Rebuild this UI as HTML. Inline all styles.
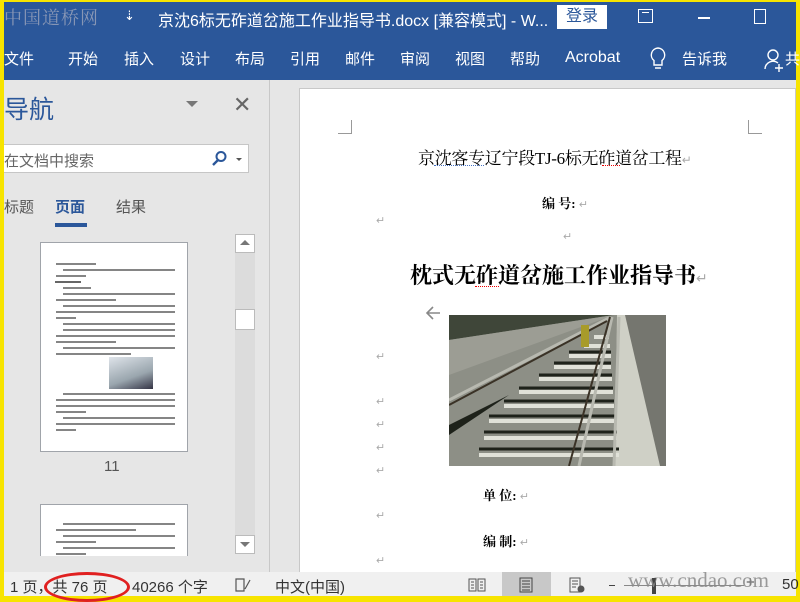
<!DOCTYPE html>
<html><head><meta charset="utf-8"><style>
*{margin:0;padding:0;box-sizing:border-box}
body{width:800px;height:600px;overflow:hidden;background:#f7e400;font-family:"Liberation Sans","Noto Sans CJK SC",sans-serif;position:relative}
.a{position:absolute;white-space:nowrap}
.doc{font-family:"Liberation Serif","Noto Serif CJK SC",serif;color:#000}
.r{position:absolute;color:#aaa;font-size:11px}
.ln{position:absolute;height:1.5px;background:#333;opacity:.6}
</style></head><body>
<!-- title bar -->
<div class="a" style="left:4px;top:2px;width:792px;height:32px;background:#2b579a"></div>
<div class="a" style="left:4px;top:4px;font-size:18px;color:#8796b5;font-family:'Noto Serif CJK SC',serif;letter-spacing:1px">中国道桥网</div>
<div class="a" style="left:124px;top:8px;font-size:13px;color:#fff">⇣</div>
<div class="a" style="left:158px;top:7px;font-size:16px;color:#fff">京沈6标无砟道岔施工作业指导书.docx [兼容模式]  -  W...</div>
<div class="a" style="left:557px;top:5px;width:50px;height:24px;background:#fff;color:#2b579a;font-size:16px;text-align:center;line-height:24px">登录</div>
<div class="a" style="left:638px;top:9px;width:15px;height:14px;border:1.5px solid #fff"></div>
<div class="a" style="left:642px;top:12px;width:7px;height:6px;border-top:1.5px solid #fff"></div>
<div class="a" style="left:698px;top:17px;width:12px;height:1.5px;background:#fff"></div>
<div class="a" style="left:754px;top:9px;width:12px;height:15px;border:1.5px solid #fff"></div>
<!-- ribbon -->
<div class="a" style="left:4px;top:34px;width:792px;height:46px;background:#2b579a"></div>
<div class="a" style="top:48px;left:0;font-size:15px;color:#fff">
<span class="a" style="left:4px">文件</span><span class="a" style="left:68px">开始</span><span class="a" style="left:124px">插入</span><span class="a" style="left:180px">设计</span><span class="a" style="left:235px">布局</span><span class="a" style="left:290px">引用</span><span class="a" style="left:345px">邮件</span><span class="a" style="left:400px">审阅</span><span class="a" style="left:455px">视图</span><span class="a" style="left:510px">帮助</span><span class="a" style="left:565px;top:1px;font-size:16px">Acrobat</span><span class="a" style="left:682px">告诉我</span><span class="a" style="left:785px">共</span>
</div>
<svg class="a" style="left:648px;top:46px" width="20" height="26" viewBox="0 0 20 26"><path d="M10 2a7 7 0 0 0-4 12.5V19h8v-4.5A7 7 0 0 0 10 2zM7 22h6" fill="none" stroke="#fff" stroke-width="1.4"/></svg>
<svg class="a" style="left:764px;top:48px" width="22" height="24" viewBox="0 0 22 24"><circle cx="9" cy="7" r="5" fill="none" stroke="#fff" stroke-width="1.4"/><path d="M1 21a8 8 0 0 1 13-6M15 16v8M11 20h8" fill="none" stroke="#fff" stroke-width="1.4"/></svg>
<!-- main area -->
<div class="a" style="left:4px;top:80px;width:792px;height:492px;background:#e6e6e6"></div>
<div class="a" style="left:269px;top:80px;width:1px;height:492px;background:#c8c8c8"></div>
<div class="a" style="left:4px;top:90px;font-size:25px;color:#2b579a">导航</div>
<div class="a" style="left:186px;top:101px;width:0;height:0;border-left:6px solid transparent;border-right:6px solid transparent;border-top:6px solid #777"></div>
<div class="a" style="left:233px;top:92px;font-size:22px;color:#666">✕</div>
<div class="a" style="left:4px;top:144px;width:245px;height:29px;background:#fff;border:1px solid #c6c6c6;border-left:none"></div>
<div class="a" style="left:4px;top:150px;font-size:15px;color:#666">在文档中搜索</div>
<svg class="a" style="left:210px;top:150px" width="18" height="18" viewBox="0 0 18 18"><circle cx="11" cy="6.5" r="4.5" fill="none" stroke="#2b579a" stroke-width="2"/><path d="M8 10l-5 5" stroke="#2b579a" stroke-width="2.4"/></svg>
<div class="a" style="left:236px;top:158px;border-left:3px solid transparent;border-right:3px solid transparent;border-top:3px solid #555"></div>
<div class="a" style="left:4px;top:196px;font-size:15px;color:#555">标题</div>
<div class="a" style="left:55px;top:196px;font-size:15px;color:#2b579a;font-weight:bold">页面</div>
<div class="a" style="left:55px;top:223px;width:32px;height:4px;background:#2b579a"></div>
<div class="a" style="left:116px;top:196px;font-size:15px;color:#555">结果</div>
<!-- thumbnails -->
<div class="a" style="left:40px;top:242px;width:148px;height:210px;background:#fff;border:1px solid #a0a4aa;overflow:hidden">
<div class="ln" style="left:15px;top:20px;width:40px"></div>
<div class="ln" style="left:22px;top:26px;width:112px"></div><div class="ln" style="left:15px;top:32px;width:30px"></div>
<div class="ln" style="left:14px;top:38px;width:26px;background:#000"></div>
<div class="ln" style="left:22px;top:44px;width:28px"></div>
<div class="ln" style="left:22px;top:50px;width:112px"></div><div class="ln" style="left:15px;top:56px;width:60px"></div>
<div class="ln" style="left:22px;top:62px;width:112px"></div><div class="ln" style="left:15px;top:68px;width:119px"></div><div class="ln" style="left:15px;top:74px;width:20px"></div>
<div class="ln" style="left:22px;top:80px;width:112px"></div>
<div class="ln" style="left:22px;top:86px;width:112px"></div><div class="ln" style="left:15px;top:92px;width:119px"></div><div class="ln" style="left:15px;top:98px;width:60px"></div>
<div class="ln" style="left:22px;top:104px;width:112px"></div><div class="ln" style="left:15px;top:110px;width:75px"></div>
<div class="a" style="left:68px;top:114px;width:44px;height:32px;background:linear-gradient(160deg,#dfe4ea,#9aa6ae 60%,#334 100%)"></div>
<div class="ln" style="left:22px;top:150px;width:112px"></div><div class="ln" style="left:15px;top:156px;width:119px"></div><div class="ln" style="left:15px;top:162px;width:119px"></div><div class="ln" style="left:15px;top:168px;width:30px"></div>
<div class="ln" style="left:22px;top:174px;width:112px"></div><div class="ln" style="left:15px;top:180px;width:119px"></div><div class="ln" style="left:15px;top:186px;width:20px"></div>
</div>
<div class="a" style="left:104px;top:458px;font-size:15px;color:#555">11</div>
<div class="a" style="left:40px;top:504px;width:148px;height:52px;background:#fff;border:1px solid #a0a4aa;border-bottom:none;overflow:hidden">
<div class="ln" style="left:22px;top:18px;width:112px"></div><div class="ln" style="left:15px;top:24px;width:80px"></div>
<div class="ln" style="left:22px;top:30px;width:112px"></div><div class="ln" style="left:15px;top:36px;width:40px"></div>
<div class="ln" style="left:22px;top:42px;width:112px"></div><div class="ln" style="left:15px;top:48px;width:30px"></div>
</div>
<!-- scrollbar -->
<div class="a" style="left:235px;top:234px;width:20px;height:320px;background:#dcdcdc"></div>
<div class="a" style="left:235px;top:234px;width:20px;height:19px;background:#fff;border:1px solid #bbb"></div>
<div class="a" style="left:240px;top:240px;border-left:5px solid transparent;border-right:5px solid transparent;border-bottom:5px solid #777"></div>
<div class="a" style="left:235px;top:309px;width:20px;height:21px;background:#fff;border:1px solid #bbb"></div>
<div class="a" style="left:235px;top:535px;width:20px;height:19px;background:#fff;border:1px solid #bbb"></div>
<div class="a" style="left:240px;top:542px;border-left:5px solid transparent;border-right:5px solid transparent;border-top:5px solid #777"></div>
<!-- page -->
<div class="a" style="left:299px;top:88px;width:497px;height:490px;background:#fff;border:1px solid #c8c8c8"></div>
<div class="a" style="left:338px;top:120px;width:14px;height:14px;border-right:1px solid #999;border-bottom:1px solid #999"></div>
<div class="a" style="left:748px;top:120px;width:14px;height:14px;border-left:1px solid #999;border-bottom:1px solid #999"></div>
<div class="a doc" style="left:418px;top:144px;font-size:17px;letter-spacing:-0.3px">京沈客专辽宁段TJ-6标无砟道岔工程<span style="color:#aaa;font-size:12px">↵</span></div>
<div class="a" style="left:434px;top:165px;width:50px;border-bottom:1px dotted #4472c4"></div>
<div class="a" style="left:602px;top:165px;width:18px;border-bottom:1px dotted #e00"></div>
<div class="a doc" style="left:542px;top:193px;font-size:13px;font-weight:bold">编 号: <span style="color:#aaa;font-size:11px;font-weight:normal">↵</span></div>
<div class="r" style="left:376px;top:214px">↵</div>
<div class="r" style="left:563px;top:230px">↵</div>
<div class="a doc" style="left:410px;top:259px;font-size:22px;font-weight:bold">枕式无砟道岔施工作业指导书<span style="color:#aaa;font-size:14px;font-weight:normal">↵</span></div>
<div class="a" style="left:475px;top:286px;width:24px;border-bottom:1px dotted #e00"></div>
<svg class="a" style="left:425px;top:305px" width="16" height="16" viewBox="0 0 16 16"><path d="M15 8H2M8 2L2 8l6 6" fill="none" stroke="#888" stroke-width="1.6"/></svg>
<svg class="a" style="left:449px;top:315px" width="217" height="151" viewBox="0 0 217 151">
<rect width="217" height="151" fill="#8d8f86"/>
<path d="M0 0h165L0 25z" fill="#3f4639"/>
<path d="M0 25L165 0 0 60z" fill="#9c9d94"/>
<path d="M170 0h47v151h-35z" fill="#75766f"/>
<path d="M168 0h8l35 151h-45z" fill="#cfd0c6"/>
<g stroke="#e0e1d8" stroke-width="4">
<line x1="30" y1="140" x2="170" y2="140"/><line x1="35" y1="123" x2="168" y2="123"/><line x1="40" y1="106" x2="166" y2="106"/><line x1="55" y1="91" x2="165" y2="91"/><line x1="70" y1="77" x2="164" y2="77"/><line x1="90" y1="64" x2="163" y2="64"/><line x1="105" y1="52" x2="162" y2="52"/><line x1="120" y1="41" x2="162" y2="41"/><line x1="135" y1="31" x2="161" y2="31"/><line x1="145" y1="22" x2="160" y2="22"/></g>
<g stroke="#1e221a" stroke-width="3">
<line x1="30" y1="134" x2="170" y2="134"/><line x1="35" y1="117" x2="168" y2="117"/><line x1="40" y1="101" x2="166" y2="101"/><line x1="55" y1="86" x2="165" y2="86"/><line x1="70" y1="73" x2="164" y2="73"/><line x1="90" y1="60" x2="163" y2="60"/><line x1="105" y1="48" x2="162" y2="48"/><line x1="120" y1="37" x2="162" y2="37"/></g>
<path d="M0 151V110L60 80 0 120z" fill="#1e221a"/>
<g stroke="#b8b9b0" stroke-width="3" fill="none"><path d="M0 85L160 3"/><path d="M130 151L163 2"/><path d="M165 151L170 2"/></g>
<g stroke="#3a3226" stroke-width="2" fill="none"><path d="M0 90L158 6"/><path d="M120 151L161 2"/></g>
<rect x="132" y="10" width="8" height="22" fill="#a89b2a"/>
</svg>
<div class="r" style="left:376px;top:350px">↵</div>
<div class="r" style="left:376px;top:395px">↵</div>
<div class="r" style="left:376px;top:418px">↵</div>
<div class="r" style="left:376px;top:441px">↵</div>
<div class="r" style="left:376px;top:464px">↵</div>
<div class="a doc" style="left:483px;top:485px;font-size:13px;font-weight:bold">单 位: <span style="color:#aaa;font-size:11px;font-weight:normal">↵</span></div>
<div class="r" style="left:376px;top:509px">↵</div>
<div class="a doc" style="left:483px;top:531px;font-size:13px;font-weight:bold">编 制: <span style="color:#aaa;font-size:11px;font-weight:normal">↵</span></div>
<div class="r" style="left:376px;top:554px">↵</div>
<!-- status -->
<div class="a" style="left:4px;top:572px;width:792px;height:24px;background:#f0f0f0"></div>
<div class="a" style="left:10px;top:576px;font-size:15px;color:#333">1 页，共 76 页</div>
<div class="a" style="left:132px;top:576px;font-size:15px;color:#333">40266 个字</div>
<svg class="a" style="left:234px;top:577px" width="18" height="16" viewBox="0 0 18 16"><path d="M2 2h8v12H2zM11 12l5-9" fill="none" stroke="#555" stroke-width="1.2"/></svg>
<div class="a" style="left:275px;top:576px;font-size:15px;color:#333">中文(中国)</div>
<svg class="a" style="left:468px;top:577px" width="18" height="16" viewBox="0 0 18 16"><path d="M1 2h7v12H1zM10 2h7v12h-7zM3 5h3M3 8h3M3 11h3M12 5h3M12 8h3M12 11h3" fill="none" stroke="#555" stroke-width="1"/></svg>
<div class="a" style="left:502px;top:572px;width:49px;height:24px;background:#c8c8c8"></div>
<svg class="a" style="left:517px;top:577px" width="18" height="16" viewBox="0 0 18 16"><path d="M3 1h12v14H3zM5 4h8M5 7h8M5 10h8M5 13h8" fill="none" stroke="#444" stroke-width="1"/></svg>
<svg class="a" style="left:568px;top:577px" width="18" height="16" viewBox="0 0 18 16"><path d="M2 1h10v14H2zM4 4h6M4 7h6M4 10h4" fill="none" stroke="#555" stroke-width="1"/><circle cx="13" cy="12" r="3.5" fill="#555"/></svg>
<div class="a" style="left:609px;top:585px;width:6px;height:1px;background:#444"></div>
<div class="a" style="left:624px;top:585px;width:120px;height:1px;background:#888"></div>
<div class="a" style="left:652px;top:578px;width:4px;height:16px;background:#444"></div>
<div class="a" style="left:746px;top:574px;font-size:15px;color:#444">+</div>
<div class="a" style="left:782px;top:576px;font-size:15px;color:#333">50</div>
<div class="a" style="left:628px;top:568px;font-size:21px;color:#8a8a8a;font-family:'Liberation Serif',serif;opacity:.85">www.cndao.com</div>
<div class="a" style="left:44px;top:572px;width:86px;height:30px;border:3px solid #e02020;border-radius:50%"></div>
</body></html>
